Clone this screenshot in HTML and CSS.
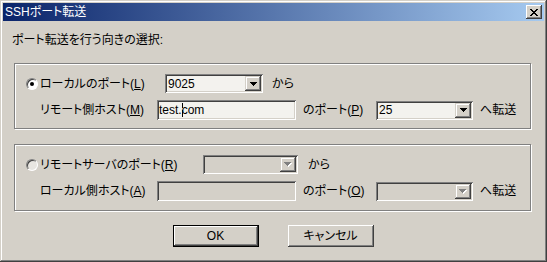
FILE: index.html
```html
<!DOCTYPE html>
<html lang="ja">

<head>
    <meta charset="UTF-8">
    <title>SSHポート転送</title>
    <link rel="stylesheet" href="styles.css">
</head>

<body>
    <div class="window">
        <div class="titlebar">
            <span class="title">SSHポート転送</span>
            <span class="close-button">
                <svg width="8" height="7" viewBox="0 0 8 7"><path d="M0 0h2v1H0zM6 0h2v1H6zM1 1h2v1H1zM5 1h2v1H5zM2 2h4v1H2zM3 3h2v1H3zM2 4h4v1H2zM1 5h2v1H1zM5 5h2v1H5zM0 6h2v1H0zM6 6h2v1H6z" fill="#000"/></svg>
            </span>
        </div>

        <div class="dialog-body">
            <div class="caption">ポート転送を行う向きの選択:</div>

            <!-- local -> remote -->
            <div class="group">
                <div class="row">
                    <span class="radio checked"></span>
                    <span class="label label-local">ローカルのポート(<u>L</u>)</span>
                    <div class="combo combo-local">
                        <span class="combo-text">9025</span>
                        <span class="drop-button">
                            <svg width="7" height="4" viewBox="0 0 7 4"><path d="M0 0h7v1H0zM1 1h5v1H1zM2 2h3v1H2zM3 3h1v1H3z" fill="#000"/></svg>
                        </span>
                    </div>
                    <span class="after-combo">から</span>
                </div>
                <div class="row row-second">
                    <span class="label label-host">リモート側ホスト(<u>M</u>)</span>
                    <div class="edit">
                        <span class="edit-text">test.com</span>
                        <span class="ibeam"></span>
                    </div>
                    <span class="label label-port">のポート(<u>P</u>)</span>
                    <div class="combo combo-port">
                        <span class="combo-text">25</span>
                        <span class="drop-button">
                            <svg width="7" height="4" viewBox="0 0 7 4"><path d="M0 0h7v1H0zM1 1h5v1H1zM2 2h3v1H2zM3 3h1v1H3z" fill="#000"/></svg>
                        </span>
                    </div>
                    <span class="after-port">へ転送</span>
                </div>
            </div>

            <!-- remote -> local -->
            <div class="group group-second">
                <div class="row">
                    <span class="radio disabled"></span>
                    <span class="label label-remote">リモートサーバのポート(<u>R</u>)</span>
                    <div class="combo combo-remote is-disabled">
                        <span class="combo-text"></span>
                        <span class="drop-button">
                            <svg width="8" height="5" viewBox="0 0 8 5"><path d="M1 1h7v1H1zM2 2h5v1H2zM3 3h3v1H3zM4 4h1v1H4z" fill="#fff"/><path d="M0 0h7v1H0zM1 1h5v1H1zM2 2h3v1H2zM3 3h1v1H3z" fill="#808080"/></svg>
                        </span>
                    </div>
                    <span class="after-combo after-remote">から</span>
                </div>
                <div class="row row-second">
                    <span class="label label-host">ローカル側ホスト(<u>A</u>)</span>
                    <div class="edit is-disabled"></div>
                    <span class="label label-port">のポート(<u>O</u>)</span>
                    <div class="combo combo-port is-disabled">
                        <span class="combo-text"></span>
                        <span class="drop-button">
                            <svg width="8" height="5" viewBox="0 0 8 5"><path d="M1 1h7v1H1zM2 2h5v1H2zM3 3h3v1H3zM4 4h1v1H4z" fill="#fff"/><path d="M0 0h7v1H0zM1 1h5v1H1zM2 2h3v1H2zM3 3h1v1H3z" fill="#808080"/></svg>
                        </span>
                    </div>
                    <span class="after-port">へ転送</span>
                </div>
            </div>

            <div class="buttons">
                <button class="btn default">OK</button>
                <button class="btn">キャンセル</button>
            </div>
        </div>
    </div>
</body>

</html>
```

FILE: styles.css
```css
body {
    margin: 0;
    font-family: "Liberation Sans", "Noto Sans CJK JP", sans-serif;
    font-size: 12px;
    line-height: 14px;
    font-feature-settings: "palt";
    color: #000;
}

.window {
    width: 547px;
    height: 262px;
    box-sizing: border-box;
    padding: 3px;
    background: #d4d0c8;
    /* classic raised frame */
    box-shadow: inset -1px -1px #404040, inset 1px 1px #d4d0c8,
        inset -2px -2px #808080, inset 2px 2px #fff;
}

.titlebar {
    height: 18px;
    display: flex;
    align-items: center;
    justify-content: space-between;
    padding: 0 2px 0 2px;
    background: linear-gradient(to right, #0a246a, #a6caf0);
    color: #fff;
}

.close-button {
    width: 16px;
    height: 14px;
    box-sizing: border-box;
    display: flex;
    align-items: center;
    justify-content: center;
    background: #d4d0c8;
    box-shadow: inset -1px -1px #404040, inset 1px 1px #fff,
        inset -2px -2px #808080;
}

.dialog-body {
    padding: 12px 13px 0 11px;
}

.caption {
    margin-left: -2px;
    height: 14px;
}

.group {
    margin-top: 16px;
    height: 66px;
    box-sizing: border-box;
    padding: 10px 0 0 11px;
    border: 1px solid #808080;
    box-shadow: inset 1px 1px #fff, 1px 1px #fff;
}

.group-second {
    margin-top: 15px;
    height: 67px;
}

.row {
    display: flex;
    align-items: center;
    height: 19px;
    white-space: nowrap;
}

.row-second {
    margin-top: 7px;
    height: 20px;
    padding-left: 14px;
}

.radio {
    position: relative;
    width: 12px;
    height: 12px;
    box-sizing: border-box;
    border-radius: 50%;
    border: 1px solid;
    border-color: #808080 #fff #fff #808080;
    background: #fff;
    box-shadow: inset 1px 1px #404040;
    margin-right: 2px;
    flex: none;
}

.radio.checked::after {
    content: "";
    position: absolute;
    left: 3px;
    top: 3px;
    width: 4px;
    height: 4px;
    border-radius: 50%;
    background: #000;
}

.radio.disabled {
    background: #e8e6e1;
}

.label {
    flex: none;
}

.label-local {
    width: 125px;
}

.label-remote {
    width: 163px;
}

.label-host {
    width: 117px;
}

.label-port {
    width: 73px;
    margin-left: 7px;
}

.combo,
.edit {
    position: relative;
    height: 19px;
    box-sizing: border-box;
    display: flex;
    align-items: center;
    background: #f3f2ee;
    /* sunken field */
    box-shadow: inset 1px 1px #808080, inset -1px -1px #fff,
        inset 2px 2px #404040, inset -2px -2px #d4d0c8;
    flex: none;
}

.combo {
    padding: 2px;
}

.combo-local {
    width: 98px;
}

.combo-remote {
    width: 95px;
}

.combo-port {
    width: 97px;
}

.combo-text {
    flex: 1;
    padding-left: 1px;
}

.drop-button {
    width: 16px;
    height: 15px;
    box-sizing: border-box;
    display: flex;
    align-items: center;
    justify-content: center;
    background: #d4d0c8;
    box-shadow: inset -1px -1px #404040, inset 1px 1px #d4d0c8,
        inset -2px -2px #808080, inset 2px 2px #fff;
}

.edit {
    width: 139px;
    height: 20px;
    padding-left: 2px;
}

.is-disabled {
    background: #d4d0c8;
}

.ibeam {
    position: absolute;
    left: 25px;
    top: 3px;
    width: 1px;
    height: 14px;
    background: linear-gradient(#000 0 5px, transparent 5px 7px, #000 7px);
}

.after-combo {
    margin-left: 9px;
}

.after-remote {
    margin-left: 10px;
}

.after-port {
    margin-left: 7px;
}

.buttons {
    display: flex;
    justify-content: center;
    gap: 29px;
    margin-top: 14px;
    padding-left: 1px;
}

.btn {
    width: 86px;
    height: 22px;
    padding: 0;
    border: none;
    font: inherit;
    font-feature-settings: "palt";
    color: #000;
    background: #d4d0c8;
    box-shadow: inset -1px -1px #404040, inset 1px 1px #fff,
        inset -2px -2px #808080, inset 2px 2px #d4d0c8;
}

.btn.default {
    box-shadow: inset 0 0 0 1px #000, inset -2px -2px #404040,
        inset 2px 2px #fff, inset -3px -3px #808080;
}
```
